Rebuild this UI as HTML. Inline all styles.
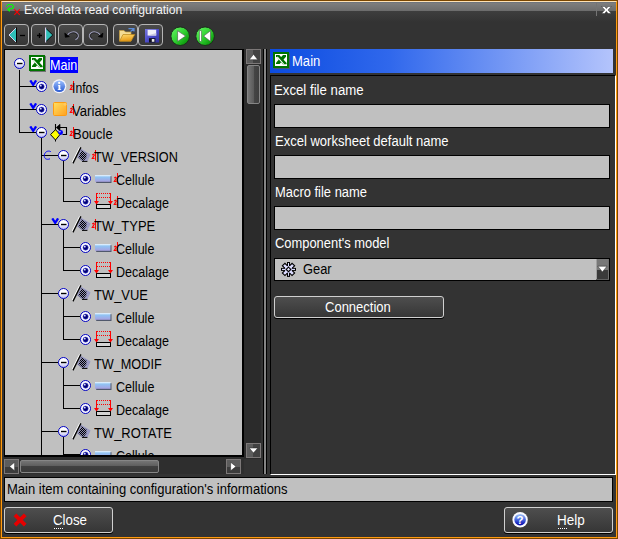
<!DOCTYPE html><html><head><meta charset="utf-8"><title>Excel data read configuration</title><style>
*{box-sizing:border-box;margin:0;padding:0}
html,body{width:618px;height:539px;overflow:hidden;background:#333}
body{font-family:"Liberation Sans",sans-serif;font-size:14px;color:#000;position:relative}
.abs{position:absolute}
#win{position:absolute;left:0;top:0;width:618px;height:539px;background:#333;overflow:hidden}
.t{position:absolute;white-space:nowrap;line-height:16px;height:16px;transform-origin:0 0}
.tb{position:absolute;top:24px;width:25px;height:22px;border:1px solid #b4b4b4;border-radius:4px;background:linear-gradient(#4a4a4a,#363636)}
.field{position:absolute;left:274px;width:336px;height:24px;background:#c0c0c0;border:1px solid #000;}
.btn{position:absolute;border:1px solid #d0d0d0;border-radius:3px;background:linear-gradient(#4e4e4e,#363636);box-shadow:0 1px 0 #000}
.hl{position:absolute;background:#000;height:1px}
.vl{position:absolute;background:#000;width:1px}
</style></head><body><div id="win">
<div class="abs" style="left:0;top:0;width:618px;height:539px;border:1px solid #7a4600"></div>
<div class="abs" style="left:1px;top:1px;width:616px;height:537px;border:1px solid #ff9a10;border-top-color:#ffe2b4"></div>
<div class="abs" style="left:2px;top:2px;width:614px;height:9px;background:linear-gradient(#808080,#6c6c6c)"></div>
<div class="abs" style="left:2px;top:11px;width:614px;height:11px;background:linear-gradient(#3e3e3e,#333)"></div>
<div class="abs" style="left:2px;top:2px;width:614px;height:1px;background:#6e747c"></div>
<div class="abs" style="left:596px;top:2px;width:1px;height:14px;background:#747474"></div>
<svg class="abs" style="left:5px;top:3px" width="16" height="13" viewBox="5 3 16 13">
<path d="M6.300 6.600 L8.200 4.500 H12 L13.700 6.700 L12.200 8.700 H10" fill="none" stroke="#00ff00" stroke-width="1.100"/>
<path d="M6.800 9.400 L9.800 6.800 V12 Z" fill="#00ff00"/>
<path d="M14.300 9.300 L19.800 14.800 M19.800 9.300 L14.300 14.800" stroke="#ff0000" stroke-width="1.100" fill="none"/>
</svg>
<div class="t" style="left:24.35px;top:2px;color:#f4f4f4;font-size:13px;transform:scaleX(0.9407)">Excel data read configuration</div>
<svg class="abs" style="left:601px;top:6px" width="11" height="8" viewBox="0 0 11 8"><path d="M0.500 0.400 H3.700 L5.400 2.500 L7.100 0.400 H10.300 L7 4 L10.300 7.600 H7.100 L5.400 5.500 L3.700 7.600 H0.500 L3.800 4 Z" fill="#fff" stroke="#2a2a2a" stroke-width="0.500"/></svg>
<div class="tb" style="left:4px"></div>
<div class="tb" style="left:31px"></div>
<div class="tb" style="left:58px"></div>
<div class="tb" style="left:83px"></div>
<div class="tb" style="left:113px"></div>
<div class="tb" style="left:138px"></div>
<svg class="abs" style="left:4px;top:24px" width="25" height="22" viewBox="4 24 25 22"><path d="M16 28 L9 35 L16 42 Z" fill="#2fc0b8"/><path d="M16 28 L9 35 L16 42" fill="none" stroke="#e4e0ff" stroke-width="0.900"/><path d="M16.500 27.500 V42.500" stroke="#000" stroke-width="1"/>
<path d="M20 35.500 H25" stroke="#000" stroke-width="1.300"/></svg>
<svg class="abs" style="left:31px;top:24px" width="25" height="22" viewBox="31 24 25 22"><path d="M45.500 28 L52.800 35 L45.500 42 Z" fill="#2fc0b8" stroke="#000" stroke-width="0.900"/><path d="M45.600 27.500 V42.500" stroke="#e4e0ff" stroke-width="1.100"/>
<path d="M37 35.500 H42 M39.500 33 V38" stroke="#000" stroke-width="1.300"/></svg>
<svg class="abs" style="left:58px;top:24px" width="25" height="22" viewBox="58 24 25 22"><path d="M67.300 35.500 C69 32.300 73.500 31 76.500 32.800 C79.500 34.800 78.600 38 75.300 39.600" fill="none" stroke="#9c9cb8" stroke-width="1.300"/><path d="M68.200 35.600 C69.800 33 73.500 32 76 33.500 C78.300 35 77.700 37.600 75.300 38.800" fill="none" stroke="#000" stroke-width="0.600"/>
<path d="M64.800 33.200 L65.400 37.300 L69.300 36.600 Z" fill="#000" stroke="#000" stroke-width="0.800"/></svg>
<svg class="abs" style="left:83px;top:24px" width="25" height="22" viewBox="83 24 25 22"><path d="M100.400 35.500 C98.700 32.300 94.200 31 91.200 32.800 C88.200 34.800 89.100 38 92.400 39.600" fill="none" stroke="#9c9cb8" stroke-width="1.300"/><path d="M99.500 35.600 C97.900 33 94.200 32 91.700 33.500 C89.400 35 90 37.600 92.400 38.800" fill="none" stroke="#000" stroke-width="0.600"/>
<path d="M102.900 33.200 L102.300 37.300 L98.400 36.600 Z" fill="#000" stroke="#000" stroke-width="0.800"/></svg>
<svg class="abs" style="left:113px;top:24px" width="25" height="22" viewBox="113 24 25 22"><defs><linearGradient id="fg" x1="0" y1="0" x2="0.300" y2="1"><stop offset="0" stop-color="#ffdc70"/><stop offset="1" stop-color="#e89c18"/></linearGradient></defs>
<path d="M119.500 30.500 H124 L125.500 32 H131 V41 H119.500 Z" fill="#f4dc94" stroke="#c8a040" stroke-width="0.700"/>
<path d="M123 34.500 H134.800 L131 41.200 H119.500 Z" fill="url(#fg)" stroke="#b88418" stroke-width="0.700"/>
<path d="M128.500 28.700 H134 V31.500 M134 28.700 L130.500 31.500" fill="none" stroke="#5c8cd8" stroke-width="1.200"/></svg>
<svg class="abs" style="left:138px;top:24px" width="25" height="22" viewBox="138 24 25 22"><defs><linearGradient id="sg" x1="0" y1="0" x2="1" y2="1"><stop offset="0" stop-color="#7878e0"/><stop offset="0.500" stop-color="#4c4cc8"/><stop offset="1" stop-color="#3030a0"/></linearGradient></defs>
<rect x="145" y="29" width="14" height="13.500" fill="url(#sg)"/>
<rect x="147.600" y="29.800" width="8.600" height="5.700" fill="#f0f0f8"/><path d="M147.600 35.500 H156.200 V33 Z" fill="#c8c8e0"/>
<rect x="149" y="38.200" width="6.400" height="4.300" fill="#101020"/><rect x="151.800" y="39" width="2.600" height="2.800" fill="#e8e8e8"/></svg>
<svg class="abs" style="left:170px;top:26px" width="21" height="21" viewBox="170 26 21 21">
<defs><linearGradient id="gg" x1="0.150" y1="0.150" x2="0.850" y2="0.850"><stop offset="0" stop-color="#58ec58"/><stop offset="0.500" stop-color="#30d030"/><stop offset="1" stop-color="#0c980c"/></linearGradient></defs>
<circle cx="180.200" cy="36.200" r="9.300" fill="url(#gg)" stroke="#1c2c1c" stroke-width="1"/>
<path d="M177.600 30.800 L185.600 36.100 L177.600 41.400 Z" fill="#fff" stroke="#505050" stroke-width="0.600"/></svg>
<svg class="abs" style="left:195px;top:26px" width="21" height="21" viewBox="195 26 21 21">
<circle cx="205.100" cy="36.200" r="9.300" fill="url(#gg)" stroke="#1c2c1c" stroke-width="1"/>
<rect x="199.500" y="30.800" width="1.900" height="10.600" fill="#fff" stroke="#505050" stroke-width="0.500"/>
<path d="M210.500 30.800 L203.600 36.100 L210.500 41.400 Z" fill="#fff" stroke="#505050" stroke-width="0.600"/></svg>
<div class="abs" style="left:4px;top:49px;width:240px;height:408px;background:#000"></div>
<div id="tree" class="abs" style="left:5px;top:50px;width:237px;height:405px;background:#c0c0c0;overflow:hidden">
<svg class="abs" width="0" height="0"><defs>
<linearGradient id="mg" x1="0" y1="0" x2="0" y2="1"><stop offset="0.450" stop-color="#fff"/><stop offset="1" stop-color="#b8b8f0"/></linearGradient>
<linearGradient id="ig" x1="0" y1="0" x2="0" y2="1"><stop offset="0" stop-color="#9cc0ff"/><stop offset="1" stop-color="#2858d0"/></linearGradient>
<linearGradient id="ng" x1="0" y1="0" x2="1" y2="1"><stop offset="0" stop-color="#ffe060"/><stop offset="1" stop-color="#ffa020"/></linearGradient>
<linearGradient id="cg" x1="0" y1="0" x2="0" y2="1"><stop offset="0" stop-color="#f0f8ff"/><stop offset="0.300" stop-color="#90c4f4"/><stop offset="1" stop-color="#a8a0e0"/></linearGradient>
<pattern id="ck" width="2" height="2" patternUnits="userSpaceOnUse"><rect width="2" height="2" fill="#8c8cb0"/><rect width="1" height="1" fill="#000"/><rect x="1" y="1" width="1" height="1" fill="#000"/></pattern>
</defs></svg>
<div class="vl" style="left:14px;top:20px;height:63px"></div>
<div class="hl" style="left:14px;top:36px;width:17px"></div>
<div class="hl" style="left:14px;top:59px;width:17px"></div>
<div class="hl" style="left:14px;top:82px;width:17px"></div>
<div class="vl" style="left:36px;top:88px;height:317px"></div>
<svg class="abs" style="left:9px;top:8px" width="11" height="11" viewBox="0 0 11 11"><circle cx="5.500" cy="5.500" r="5" fill="url(#mg)" stroke="#0000c0" stroke-width="1"/><path d="M3 5.500 H8.500" stroke="#000" stroke-width="1.400"/></svg>
<svg class="abs" style="left:24px;top:5px" width="17" height="17" viewBox="0 0 17 17"><rect x="1" y="1" width="16" height="16" fill="#585858" opacity="0.750"/><rect x="0" y="0" width="16" height="16" fill="#007400"/><rect x="2" y="2" width="12" height="12" fill="#fff"/><path d="M3 3 H6.300 L13.600 11 V12.300 H9.800 L3 4.300 Z" fill="#007400"/><path d="M10 3 H13 V4.800 L6.600 12 H3 V10.800 Z" fill="#007400"/><path d="M4.200 4.800 L10.600 12" stroke="#fff" stroke-width="1.100"/><rect x="12" y="6.600" width="2" height="2.200" fill="#fff"/></svg>
<div class="abs" style="left:45px;top:7px;width:28px;height:16px;background:#0000ff"></div>
<div class="t" style="left:44.79px;top:7px;color:#fff;transform:scaleX(0.8959)">Main</div>
<svg class="abs" style="left:24px;top:30px" width="9" height="6" viewBox="0 0 9 6"><path d="M1.300 0.400 L4.200 4.800 L7.100 0.400" fill="none" stroke="#0000ff" stroke-width="2.300" stroke-linejoin="miter"/></svg>
<svg class="abs" style="left:31px;top:31px" width="11" height="11" viewBox="0 0 11 11"><circle cx="5.500" cy="5.500" r="5" fill="#fff" stroke="#0000c0" stroke-width="1"/><circle cx="5.600" cy="5.600" r="2.600" fill="#000078" stroke="#4848d0" stroke-width="0.600"/><circle cx="4.800" cy="4.700" r="0.900" fill="#e0e0ff"/></svg>
<svg class="abs" style="left:47px;top:29px" width="15" height="15" viewBox="0 0 15 15"><circle cx="7.300" cy="7.300" r="7" fill="#f4f4fc"/><circle cx="7.300" cy="7.300" r="5.800" fill="url(#ig)"/><path d="M6.200 6 H8.300 V10.200 H9.200 V11 H5.700 V10.200 H6.500 V6.800 H5.900 Z" fill="#fff"/><circle cx="7.200" cy="3.900" r="1.100" fill="#fff"/></svg>
<svg class="abs" style="left:64px;top:31px" width="6" height="11" viewBox="0 0 6 11"><path d="M4.500 0 V10.500" stroke="#ff0000" stroke-width="1"/><path d="M1.200 5 L2.500 4.200 L3.300 5 L1.300 8.300 L3.600 8.300" fill="none" stroke="#ff0000" stroke-width="1.150"/></svg>
<div class="t" style="left:67.11px;top:30px;color:#000;transform:scaleX(0.8729)">Infos</div>
<svg class="abs" style="left:24px;top:53px" width="9" height="6" viewBox="0 0 9 6"><path d="M1.300 0.400 L4.200 4.800 L7.100 0.400" fill="none" stroke="#0000ff" stroke-width="2.300" stroke-linejoin="miter"/></svg>
<svg class="abs" style="left:31px;top:54px" width="11" height="11" viewBox="0 0 11 11"><circle cx="5.500" cy="5.500" r="5" fill="#fff" stroke="#0000c0" stroke-width="1"/><circle cx="5.600" cy="5.600" r="2.600" fill="#000078" stroke="#4848d0" stroke-width="0.600"/><circle cx="4.800" cy="4.700" r="0.900" fill="#e0e0ff"/></svg>
<svg class="abs" style="left:48px;top:52px" width="14" height="14" viewBox="0 0 14 14"><rect x="0.500" y="0.500" width="13" height="13" rx="1" fill="url(#ng)" stroke="#ff9c10" stroke-width="1"/><circle cx="12" cy="2.300" r="1.500" fill="#ffc860"/></svg>
<svg class="abs" style="left:64px;top:54px" width="6" height="11" viewBox="0 0 6 11"><path d="M4.500 0 V10.500" stroke="#ff0000" stroke-width="1"/><path d="M1.200 5 L2.500 4.200 L3.300 5 L1.300 8.300 L3.600 8.300" fill="none" stroke="#ff0000" stroke-width="1.150"/></svg>
<div class="t" style="left:66.96px;top:53px;color:#000;transform:scaleX(0.9385)">Variables</div>
<svg class="abs" style="left:24px;top:76px" width="9" height="6" viewBox="0 0 9 6"><path d="M1.300 0.400 L4.200 4.800 L7.100 0.400" fill="none" stroke="#0000ff" stroke-width="2.300" stroke-linejoin="miter"/></svg>
<svg class="abs" style="left:31px;top:77px" width="11" height="11" viewBox="0 0 11 11"><circle cx="5.500" cy="5.500" r="5" fill="url(#mg)" stroke="#0000c0" stroke-width="1"/><path d="M3 5.500 H8.500" stroke="#000" stroke-width="1.400"/></svg>
<svg class="abs" style="left:45px;top:74px" width="18" height="18" viewBox="0 0 18 18"><path d="M10 3.500 H16.500 V10.500 H12.500" fill="none" stroke="#000" stroke-width="1.100"/><path d="M6.300 3.500 L10 0.300 V6.700 Z" fill="#000" stroke="#000" stroke-width="0.700"/><path d="M5.500 0 V6.500" stroke="#000" stroke-width="1.100"/><path d="M5.500 5.700 L10 10.500 L5.500 16 L0.500 10.600 Z" fill="#ffff00" stroke="#000" stroke-width="1"/><path d="M5.500 16 V17.500" stroke="#000" stroke-width="1"/><circle cx="10.600" cy="8.500" r="2.400" fill="#0000ff"/><circle cx="9.900" cy="7.800" r="0.700" fill="#fff"/></svg>
<svg class="abs" style="left:64px;top:77px" width="6" height="11" viewBox="0 0 6 11"><path d="M4.500 0 V10.500" stroke="#ff0000" stroke-width="1"/><path d="M1.200 5 L2.500 4.200 L3.300 5 L1.300 8.300 L3.600 8.300" fill="none" stroke="#ff0000" stroke-width="1.150"/></svg>
<div class="t" style="left:67.57px;top:76px;color:#000;transform:scaleX(0.9250)">Boucle</div>
<div class="hl" style="left:36px;top:105px;width:17px"></div>
<svg class="abs" style="left:38px;top:100px" width="9" height="11" viewBox="0 0 9 11"><path d="M7.800 1.600 C4.500 0 1.600 2.300 1.300 5.300 C1 8.600 3.500 10.200 7 8.800" fill="none" stroke="#0000ff" stroke-width="0.950"/></svg>
<svg class="abs" style="left:53px;top:100px" width="11" height="11" viewBox="0 0 11 11"><circle cx="5.500" cy="5.500" r="5" fill="url(#mg)" stroke="#0000c0" stroke-width="1"/><path d="M3 5.500 H8.500" stroke="#000" stroke-width="1.400"/></svg>
<svg class="abs" style="left:67px;top:97px" width="20" height="18" viewBox="0 0 20 18"><path d="M8.800 1.500 L18.600 7.400 L15.400 14.200 L10 14.200 L5 10.500 Z" fill="#9c9cc4"/><path d="M9.600 3.300 L14.600 6.600 L14.300 10.500 L11.800 13.800 L9.500 13.200 L6.300 10.300 Z" fill="url(#ck)"/><path d="M10 14.400 H15.400" stroke="#000" stroke-width="1"/><path d="M-0.300 16.400 L7.700 0.400" stroke="#fff" stroke-width="1.200"/><path d="M0.900 16.400 L8.900 0.400" stroke="#000" stroke-width="1.300"/></svg>
<svg class="abs" style="left:86px;top:100px" width="6" height="11" viewBox="0 0 6 11"><path d="M4.500 0 V10.500" stroke="#ff0000" stroke-width="1"/><path d="M1.200 5 L2.500 4.200 L3.300 5 L1.300 8.300 L3.600 8.300" fill="none" stroke="#ff0000" stroke-width="1.150"/></svg>
<div class="t" style="left:89.38px;top:99px;color:#000;transform:scaleX(0.9063)">TW_VERSION</div>
<div class="vl" style="left:58px;top:111px;height:41px"></div>
<div class="hl" style="left:58px;top:128px;width:17px"></div>
<div class="hl" style="left:58px;top:151px;width:17px"></div>
<svg class="abs" style="left:75px;top:123px" width="11" height="11" viewBox="0 0 11 11"><circle cx="5.500" cy="5.500" r="5" fill="#fff" stroke="#0000c0" stroke-width="1"/><circle cx="5.600" cy="5.600" r="2.600" fill="#000078" stroke="#4848d0" stroke-width="0.600"/><circle cx="4.800" cy="4.700" r="0.900" fill="#e0e0ff"/></svg>
<svg class="abs" style="left:90px;top:125px" width="17" height="9" viewBox="0 0 17 9"><rect x="1.200" y="1.200" width="15.300" height="6.800" fill="#50586c"/><rect x="0" y="0" width="15.500" height="6.800" fill="url(#cg)"/></svg>
<svg class="abs" style="left:108px;top:123px" width="6" height="11" viewBox="0 0 6 11"><path d="M4.500 0 V10.500" stroke="#ff0000" stroke-width="1"/><path d="M1.200 5 L2.500 4.200 L3.300 5 L1.300 8.300 L3.600 8.300" fill="none" stroke="#ff0000" stroke-width="1.150"/></svg>
<div class="t" style="left:111.49px;top:122px;color:#000;transform:scaleX(0.8969)">Cellule</div>
<svg class="abs" style="left:75px;top:146px" width="11" height="11" viewBox="0 0 11 11"><circle cx="5.500" cy="5.500" r="5" fill="#fff" stroke="#0000c0" stroke-width="1"/><circle cx="5.600" cy="5.600" r="2.600" fill="#000078" stroke="#4848d0" stroke-width="0.600"/><circle cx="4.800" cy="4.700" r="0.900" fill="#e0e0ff"/></svg>
<svg class="abs" style="left:89px;top:142px" width="20" height="18" viewBox="0 0 20 18"><g shape-rendering="crispEdges"><path d="M3 1.500 H16 M3 5.500 H16" stroke="#ff0000" stroke-width="1" stroke-dasharray="1 1"/><path d="M2.500 1 V12 M16.500 1 V12" stroke="#ff0000" stroke-width="1"/><rect x="2.500" y="12.500" width="14" height="4" fill="#d4d4d4" stroke="#000" stroke-width="1"/></g><path d="M0 9 H5 L2.500 12.500 Z M14 9 H19 L16.500 12.500 Z" fill="#ff0000"/></svg>
<svg class="abs" style="left:108px;top:146px" width="6" height="11" viewBox="0 0 6 11"><path d="M4.500 0 V10.500" stroke="#ff0000" stroke-width="1"/><path d="M1.200 5 L2.500 4.200 L3.300 5 L1.300 8.300 L3.600 8.300" fill="none" stroke="#ff0000" stroke-width="1.150"/></svg>
<div class="t" style="left:111.49px;top:145px;color:#000;transform:scaleX(0.8959)">Decalage</div>
<div class="hl" style="left:36px;top:174px;width:17px"></div>
<svg class="abs" style="left:46px;top:168px" width="9" height="6" viewBox="0 0 9 6"><path d="M1.300 0.400 L4.200 4.800 L7.100 0.400" fill="none" stroke="#0000ff" stroke-width="2.300" stroke-linejoin="miter"/></svg>
<svg class="abs" style="left:53px;top:169px" width="11" height="11" viewBox="0 0 11 11"><circle cx="5.500" cy="5.500" r="5" fill="url(#mg)" stroke="#0000c0" stroke-width="1"/><path d="M3 5.500 H8.500" stroke="#000" stroke-width="1.400"/></svg>
<svg class="abs" style="left:67px;top:166px" width="20" height="18" viewBox="0 0 20 18"><path d="M8.800 1.500 L18.600 7.400 L15.400 14.200 L10 14.200 L5 10.500 Z" fill="#9c9cc4"/><path d="M9.600 3.300 L14.600 6.600 L14.300 10.500 L11.800 13.800 L9.500 13.200 L6.300 10.300 Z" fill="url(#ck)"/><path d="M10 14.400 H15.400" stroke="#000" stroke-width="1"/><path d="M-0.300 16.400 L7.700 0.400" stroke="#fff" stroke-width="1.200"/><path d="M0.900 16.400 L8.900 0.400" stroke="#000" stroke-width="1.300"/></svg>
<svg class="abs" style="left:86px;top:169px" width="6" height="11" viewBox="0 0 6 11"><path d="M4.500 0 V10.500" stroke="#ff0000" stroke-width="1"/><path d="M1.200 5 L2.500 4.200 L3.300 5 L1.300 8.300 L3.600 8.300" fill="none" stroke="#ff0000" stroke-width="1.150"/></svg>
<div class="t" style="left:89.37px;top:168px;color:#000;transform:scaleX(0.9250)">TW_TYPE</div>
<div class="vl" style="left:58px;top:180px;height:41px"></div>
<div class="hl" style="left:58px;top:197px;width:17px"></div>
<div class="hl" style="left:58px;top:220px;width:17px"></div>
<svg class="abs" style="left:75px;top:192px" width="11" height="11" viewBox="0 0 11 11"><circle cx="5.500" cy="5.500" r="5" fill="#fff" stroke="#0000c0" stroke-width="1"/><circle cx="5.600" cy="5.600" r="2.600" fill="#000078" stroke="#4848d0" stroke-width="0.600"/><circle cx="4.800" cy="4.700" r="0.900" fill="#e0e0ff"/></svg>
<svg class="abs" style="left:90px;top:194px" width="17" height="9" viewBox="0 0 17 9"><rect x="1.200" y="1.200" width="15.300" height="6.800" fill="#50586c"/><rect x="0" y="0" width="15.500" height="6.800" fill="url(#cg)"/></svg>
<svg class="abs" style="left:108px;top:192px" width="6" height="11" viewBox="0 0 6 11"><path d="M4.500 0 V10.500" stroke="#ff0000" stroke-width="1"/><path d="M1.200 5 L2.500 4.200 L3.300 5 L1.300 8.300 L3.600 8.300" fill="none" stroke="#ff0000" stroke-width="1.150"/></svg>
<div class="t" style="left:111.49px;top:191px;color:#000;transform:scaleX(0.8969)">Cellule</div>
<svg class="abs" style="left:75px;top:215px" width="11" height="11" viewBox="0 0 11 11"><circle cx="5.500" cy="5.500" r="5" fill="#fff" stroke="#0000c0" stroke-width="1"/><circle cx="5.600" cy="5.600" r="2.600" fill="#000078" stroke="#4848d0" stroke-width="0.600"/><circle cx="4.800" cy="4.700" r="0.900" fill="#e0e0ff"/></svg>
<svg class="abs" style="left:89px;top:211px" width="20" height="18" viewBox="0 0 20 18"><g shape-rendering="crispEdges"><path d="M3 1.500 H16 M3 5.500 H16" stroke="#ff0000" stroke-width="1" stroke-dasharray="1 1"/><path d="M2.500 1 V12 M16.500 1 V12" stroke="#ff0000" stroke-width="1"/><rect x="2.500" y="12.500" width="14" height="4" fill="#d4d4d4" stroke="#000" stroke-width="1"/></g><path d="M0 9 H5 L2.500 12.500 Z M14 9 H19 L16.500 12.500 Z" fill="#ff0000"/></svg>
<div class="t" style="left:111.49px;top:214px;color:#000;transform:scaleX(0.8959)">Decalage</div>
<div class="hl" style="left:36px;top:243px;width:17px"></div>
<svg class="abs" style="left:53px;top:238px" width="11" height="11" viewBox="0 0 11 11"><circle cx="5.500" cy="5.500" r="5" fill="url(#mg)" stroke="#0000c0" stroke-width="1"/><path d="M3 5.500 H8.500" stroke="#000" stroke-width="1.400"/></svg>
<svg class="abs" style="left:67px;top:235px" width="20" height="18" viewBox="0 0 20 18"><path d="M8.800 1.500 L18.600 7.400 L15.400 14.200 L10 14.200 L5 10.500 Z" fill="#9c9cc4"/><path d="M9.600 3.300 L14.600 6.600 L14.300 10.500 L11.800 13.800 L9.500 13.200 L6.300 10.300 Z" fill="url(#ck)"/><path d="M10 14.400 H15.400" stroke="#000" stroke-width="1"/><path d="M-0.300 16.400 L7.700 0.400" stroke="#fff" stroke-width="1.200"/><path d="M0.900 16.400 L8.900 0.400" stroke="#000" stroke-width="1.300"/></svg>
<div class="t" style="left:89.37px;top:237px;color:#000;transform:scaleX(0.9250)">TW_VUE</div>
<div class="vl" style="left:58px;top:249px;height:41px"></div>
<div class="hl" style="left:58px;top:266px;width:17px"></div>
<div class="hl" style="left:58px;top:289px;width:17px"></div>
<svg class="abs" style="left:75px;top:261px" width="11" height="11" viewBox="0 0 11 11"><circle cx="5.500" cy="5.500" r="5" fill="#fff" stroke="#0000c0" stroke-width="1"/><circle cx="5.600" cy="5.600" r="2.600" fill="#000078" stroke="#4848d0" stroke-width="0.600"/><circle cx="4.800" cy="4.700" r="0.900" fill="#e0e0ff"/></svg>
<svg class="abs" style="left:90px;top:263px" width="17" height="9" viewBox="0 0 17 9"><rect x="1.200" y="1.200" width="15.300" height="6.800" fill="#50586c"/><rect x="0" y="0" width="15.500" height="6.800" fill="url(#cg)"/></svg>
<div class="t" style="left:111.49px;top:260px;color:#000;transform:scaleX(0.8969)">Cellule</div>
<svg class="abs" style="left:75px;top:284px" width="11" height="11" viewBox="0 0 11 11"><circle cx="5.500" cy="5.500" r="5" fill="#fff" stroke="#0000c0" stroke-width="1"/><circle cx="5.600" cy="5.600" r="2.600" fill="#000078" stroke="#4848d0" stroke-width="0.600"/><circle cx="4.800" cy="4.700" r="0.900" fill="#e0e0ff"/></svg>
<svg class="abs" style="left:89px;top:280px" width="20" height="18" viewBox="0 0 20 18"><g shape-rendering="crispEdges"><path d="M3 1.500 H16 M3 5.500 H16" stroke="#ff0000" stroke-width="1" stroke-dasharray="1 1"/><path d="M2.500 1 V12 M16.500 1 V12" stroke="#ff0000" stroke-width="1"/><rect x="2.500" y="12.500" width="14" height="4" fill="#d4d4d4" stroke="#000" stroke-width="1"/></g><path d="M0 9 H5 L2.500 12.500 Z M14 9 H19 L16.500 12.500 Z" fill="#ff0000"/></svg>
<div class="t" style="left:111.49px;top:283px;color:#000;transform:scaleX(0.8959)">Decalage</div>
<div class="hl" style="left:36px;top:312px;width:17px"></div>
<svg class="abs" style="left:53px;top:307px" width="11" height="11" viewBox="0 0 11 11"><circle cx="5.500" cy="5.500" r="5" fill="url(#mg)" stroke="#0000c0" stroke-width="1"/><path d="M3 5.500 H8.500" stroke="#000" stroke-width="1.400"/></svg>
<svg class="abs" style="left:67px;top:304px" width="20" height="18" viewBox="0 0 20 18"><path d="M8.800 1.500 L18.600 7.400 L15.400 14.200 L10 14.200 L5 10.500 Z" fill="#9c9cc4"/><path d="M9.600 3.300 L14.600 6.600 L14.300 10.500 L11.800 13.800 L9.500 13.200 L6.300 10.300 Z" fill="url(#ck)"/><path d="M10 14.400 H15.400" stroke="#000" stroke-width="1"/><path d="M-0.300 16.400 L7.700 0.400" stroke="#fff" stroke-width="1.200"/><path d="M0.900 16.400 L8.900 0.400" stroke="#000" stroke-width="1.300"/></svg>
<div class="t" style="left:89.38px;top:306px;color:#000;transform:scaleX(0.9068)">TW_MODIF</div>
<div class="vl" style="left:58px;top:318px;height:41px"></div>
<div class="hl" style="left:58px;top:335px;width:17px"></div>
<div class="hl" style="left:58px;top:358px;width:17px"></div>
<svg class="abs" style="left:75px;top:330px" width="11" height="11" viewBox="0 0 11 11"><circle cx="5.500" cy="5.500" r="5" fill="#fff" stroke="#0000c0" stroke-width="1"/><circle cx="5.600" cy="5.600" r="2.600" fill="#000078" stroke="#4848d0" stroke-width="0.600"/><circle cx="4.800" cy="4.700" r="0.900" fill="#e0e0ff"/></svg>
<svg class="abs" style="left:90px;top:332px" width="17" height="9" viewBox="0 0 17 9"><rect x="1.200" y="1.200" width="15.300" height="6.800" fill="#50586c"/><rect x="0" y="0" width="15.500" height="6.800" fill="url(#cg)"/></svg>
<div class="t" style="left:111.49px;top:329px;color:#000;transform:scaleX(0.8969)">Cellule</div>
<svg class="abs" style="left:75px;top:353px" width="11" height="11" viewBox="0 0 11 11"><circle cx="5.500" cy="5.500" r="5" fill="#fff" stroke="#0000c0" stroke-width="1"/><circle cx="5.600" cy="5.600" r="2.600" fill="#000078" stroke="#4848d0" stroke-width="0.600"/><circle cx="4.800" cy="4.700" r="0.900" fill="#e0e0ff"/></svg>
<svg class="abs" style="left:89px;top:349px" width="20" height="18" viewBox="0 0 20 18"><g shape-rendering="crispEdges"><path d="M3 1.500 H16 M3 5.500 H16" stroke="#ff0000" stroke-width="1" stroke-dasharray="1 1"/><path d="M2.500 1 V12 M16.500 1 V12" stroke="#ff0000" stroke-width="1"/><rect x="2.500" y="12.500" width="14" height="4" fill="#d4d4d4" stroke="#000" stroke-width="1"/></g><path d="M0 9 H5 L2.500 12.500 Z M14 9 H19 L16.500 12.500 Z" fill="#ff0000"/></svg>
<div class="t" style="left:111.49px;top:352px;color:#000;transform:scaleX(0.8959)">Decalage</div>
<div class="hl" style="left:36px;top:381px;width:17px"></div>
<svg class="abs" style="left:53px;top:376px" width="11" height="11" viewBox="0 0 11 11"><circle cx="5.500" cy="5.500" r="5" fill="url(#mg)" stroke="#0000c0" stroke-width="1"/><path d="M3 5.500 H8.500" stroke="#000" stroke-width="1.400"/></svg>
<svg class="abs" style="left:67px;top:373px" width="20" height="18" viewBox="0 0 20 18"><path d="M8.800 1.500 L18.600 7.400 L15.400 14.200 L10 14.200 L5 10.500 Z" fill="#9c9cc4"/><path d="M9.600 3.300 L14.600 6.600 L14.300 10.500 L11.800 13.800 L9.500 13.200 L6.300 10.300 Z" fill="url(#ck)"/><path d="M10 14.400 H15.400" stroke="#000" stroke-width="1"/><path d="M-0.300 16.400 L7.700 0.400" stroke="#fff" stroke-width="1.200"/><path d="M0.900 16.400 L8.900 0.400" stroke="#000" stroke-width="1.300"/></svg>
<div class="t" style="left:89.37px;top:375px;color:#000;transform:scaleX(0.9250)">TW_ROTATE</div>
<div class="vl" style="left:58px;top:387px;height:41px"></div>
<div class="hl" style="left:58px;top:404px;width:17px"></div>
<div class="hl" style="left:58px;top:427px;width:17px"></div>
<svg class="abs" style="left:75px;top:399px" width="11" height="11" viewBox="0 0 11 11"><circle cx="5.500" cy="5.500" r="5" fill="#fff" stroke="#0000c0" stroke-width="1"/><circle cx="5.600" cy="5.600" r="2.600" fill="#000078" stroke="#4848d0" stroke-width="0.600"/><circle cx="4.800" cy="4.700" r="0.900" fill="#e0e0ff"/></svg>
<svg class="abs" style="left:90px;top:401px" width="17" height="9" viewBox="0 0 17 9"><rect x="1.200" y="1.200" width="15.300" height="6.800" fill="#50586c"/><rect x="0" y="0" width="15.500" height="6.800" fill="url(#cg)"/></svg>
<div class="t" style="left:111.49px;top:398px;color:#000;transform:scaleX(0.8969)">Cellule</div>
<svg class="abs" style="left:75px;top:422px" width="11" height="11" viewBox="0 0 11 11"><circle cx="5.500" cy="5.500" r="5" fill="#fff" stroke="#0000c0" stroke-width="1"/><circle cx="5.600" cy="5.600" r="2.600" fill="#000078" stroke="#4848d0" stroke-width="0.600"/><circle cx="4.800" cy="4.700" r="0.900" fill="#e0e0ff"/></svg>
<svg class="abs" style="left:89px;top:418px" width="20" height="18" viewBox="0 0 20 18"><g shape-rendering="crispEdges"><path d="M3 1.500 H16 M3 5.500 H16" stroke="#ff0000" stroke-width="1" stroke-dasharray="1 1"/><path d="M2.500 1 V12 M16.500 1 V12" stroke="#ff0000" stroke-width="1"/><rect x="2.500" y="12.500" width="14" height="4" fill="#d4d4d4" stroke="#000" stroke-width="1"/></g><path d="M0 9 H5 L2.500 12.500 Z M14 9 H19 L16.500 12.500 Z" fill="#ff0000"/></svg>
<div class="t" style="left:111.49px;top:421px;color:#000;transform:scaleX(0.8959)">Decalage</div>
</div>
<div class="abs" style="left:244px;top:49px;width:17px;height:410px;background:#2b2b2b"></div>
<svg class="abs" style="left:246px;top:49px" width="15" height="15" viewBox="0 0 15 15"><rect x="0.500" y="0.500" width="7" height="14" fill="#5c5c5c"/><rect x="7.500" y="0.500" width="7" height="14" fill="#424242"/><rect x="0.500" y="0.500" width="14" height="14" fill="none" stroke="#7c7878"/><path d="M3.200 10.700 L7.500 5.300 L11.800 10.700 Z" fill="#fff" stroke="#222" stroke-width="0.500"/></svg>
<svg class="abs" style="left:246px;top:443px" width="15" height="15" viewBox="0 0 15 15"><rect x="0.500" y="0.500" width="7" height="14" fill="#5c5c5c"/><rect x="7.500" y="0.500" width="7" height="14" fill="#424242"/><rect x="0.500" y="0.500" width="14" height="14" fill="none" stroke="#7c7878"/><path d="M3.200 5 L7.500 10 L11.800 5 Z" fill="#fff" stroke="#222" stroke-width="0.500"/></svg>
<div class="abs" style="left:247px;top:65px;width:13px;height:39px;border:1px solid #868686;border-radius:2px;background:linear-gradient(90deg,#767676 0,#5c5c5c 50%,#464646 50%,#3e3e3e)"></div>
<div class="abs" style="left:4px;top:457px;width:240px;height:17px;background:#2e2e2e"></div>
<svg class="abs" style="left:4px;top:459px" width="15" height="15" viewBox="0 0 15 15"><rect x="0.500" y="0.500" width="14" height="7.500" fill="#5c5c5c"/><rect x="0.500" y="8" width="14" height="6.500" fill="#3c3c3c"/><rect x="0.500" y="0.500" width="14" height="14" fill="none" stroke="#7c7878"/><path d="M10.600 3.200 L5.500 7.500 L10.600 11.800 Z" fill="#fff" stroke="#222" stroke-width="0.500"/></svg>
<svg class="abs" style="left:226px;top:459px" width="15" height="15" viewBox="0 0 15 15"><rect x="0.500" y="0.500" width="14" height="7.500" fill="#5c5c5c"/><rect x="0.500" y="8" width="14" height="6.500" fill="#3c3c3c"/><rect x="0.500" y="0.500" width="14" height="14" fill="none" stroke="#7c7878"/><path d="M4.600 3.200 L10 7.500 L4.600 11.800 Z" fill="#fff" stroke="#222" stroke-width="0.500"/></svg>
<div class="abs" style="left:20px;top:460px;width:139px;height:13px;border:1px solid #868686;border-radius:2px;background:linear-gradient(#747474 0,#5c5c5c 50%,#404040 50%,#3a3a3a)"></div>
<div class="abs" style="left:263px;top:49px;width:4px;height:425px;background:#000"></div>
<div class="abs" style="left:264px;top:49px;width:2px;height:425px;background:#848484"></div>
<div class="abs" style="left:270px;top:49px;width:343px;height:24px;background:linear-gradient(90deg,#0c4ce0,#3068ec 35%,#b4c4fc)"></div>
<svg class="abs" style="left:273px;top:52px" width="17" height="17" viewBox="0 0 17 17"><rect x="1" y="1" width="16" height="16" fill="#585858" opacity="0.750"/><rect x="0" y="0" width="16" height="16" fill="#007400"/><rect x="2" y="2" width="12" height="12" fill="#fff"/><path d="M3 3 H6.300 L13.600 11 V12.300 H9.800 L3 4.300 Z" fill="#007400"/><path d="M10 3 H13 V4.800 L6.600 12 H3 V10.800 Z" fill="#007400"/><path d="M4.200 4.800 L10.600 12" stroke="#fff" stroke-width="1.100"/><rect x="12" y="6.600" width="2" height="2.200" fill="#fff"/></svg>
<div class="t" style="left:291.76px;top:53px;color:#fff;transform:scaleX(0.9322)">Main</div>
<div class="abs" style="left:270px;top:75px;width:346px;height:400px;border:1px solid #000;border-right-color:#fff;border-bottom-color:#fff;background:#333"></div>
<div class="t" style="left:274.45px;top:82px;color:#fff;transform:scaleX(0.9438)">Excel file name</div>
<div class="field" style="top:104px"></div>
<div class="t" style="left:274.96px;top:133px;color:#fff;transform:scaleX(0.9295)">Excel worksheet default name</div>
<div class="field" style="top:155px"></div>
<div class="t" style="left:274.97px;top:184px;color:#fff;transform:scaleX(0.9238)">Macro file name</div>
<div class="field" style="top:206px"></div>
<div class="t" style="left:274.97px;top:235px;color:#fff;transform:scaleX(0.9220)">Component's model</div>
<div class="field" style="top:258px;height:23px"></div>
<svg class="abs" style="left:281px;top:262px" width="15" height="15" viewBox="0 0 15 15"><g transform="translate(7.500 7.400)">
<g fill="#dcdcff" stroke="#000" stroke-width="1"><rect x="-1" y="-7" width="2" height="14"/><rect x="-7" y="-1" width="14" height="2"/><rect x="-1.700" y="-6.700" width="3.400" height="13.400" transform="rotate(45)" stroke-width="1.400"/><rect x="-1.700" y="-6.700" width="3.400" height="13.400" transform="rotate(-45)" stroke-width="1.400"/></g>
<g fill="#dcdcff"><rect x="-0.500" y="-6.400" width="1" height="12.800"/><rect x="-6.400" y="-0.500" width="12.800" height="1"/><rect x="-1.200" y="-6.200" width="2.400" height="12.400" transform="rotate(45)"/><rect x="-1.200" y="-6.200" width="2.400" height="12.400" transform="rotate(-45)"/></g>
<circle r="3.300" fill="#dcdcff"/><path d="M0 -2.300 L2.300 0 L0 2.300 L-2.300 0 Z" fill="#e8e8ff" stroke="#000" stroke-width="1.100"/></g></svg>
<div class="t" style="left:302.87px;top:261px;color:#000;transform:scaleX(0.9189)">Gear</div>
<svg class="abs" style="left:596px;top:259px" width="13" height="21" viewBox="0 0 13 21"><rect width="13" height="21" fill="#3a3a3a"/><rect width="13" height="11" fill="#787878"/><rect width="1" height="21" fill="#a0a0a0"/><rect x="12" width="1" height="21" fill="#707070"/><rect y="20" width="13" height="1" fill="#606060"/><path d="M1.800 7.200 H11 L6.400 12.900 Z" fill="#fff" stroke="#222" stroke-width="0.500"/></svg>
<div class="btn" style="left:274px;top:296px;width:170px;height:22px"></div>
<div class="t" style="left:325.46px;top:299px;color:#fff;transform:scaleX(0.9290)">Connection</div>
<div class="abs" style="left:4px;top:477px;width:609px;height:25px;background:#c0c0c0;border:1px solid #000"></div>
<div class="t" style="left:6.96px;top:481px;color:#000;transform:scaleX(0.9283)">Main item containing configuration's informations</div>
<div class="btn" style="left:4px;top:507px;width:109px;height:26px"></div>
<svg class="abs" style="left:12px;top:512px" width="16" height="16" viewBox="12 512 16 16"><path d="M15 514.900 L25.200 525.100 M25.200 514.900 L15 525.100" stroke="#e60000" stroke-width="3.800"/></svg>
<div class="t" style="left:53.05px;top:512px;color:#fff;transform:scaleX(0.9498)">Close</div>
<div class="abs" style="left:54px;top:528px;width:9px;height:1px;background:repeating-linear-gradient(90deg,#fff 0 1px,transparent 1px 2px)"></div>
<div class="btn" style="left:504px;top:507px;width:109px;height:26px"></div>
<svg class="abs" style="left:512px;top:512px" width="17" height="16" viewBox="0 0 17 16"><defs><linearGradient id="hg" x1="0" y1="0" x2="0" y2="1"><stop offset="0" stop-color="#a8c8f8"/><stop offset="0.500" stop-color="#4868e0"/><stop offset="1" stop-color="#0000a8"/></linearGradient></defs><circle cx="8.100" cy="7.700" r="7.700" fill="#fafaff"/><circle cx="8.100" cy="7.700" r="5.800" fill="url(#hg)"/><text x="8.100" y="11.900" font-size="11.500" font-weight="bold" fill="#fff" text-anchor="middle" font-family="Liberation Sans, sans-serif">?</text></svg>
<div class="t" style="left:557.43px;top:512px;color:#fff;transform:scaleX(0.9619)">Help</div>
<div class="abs" style="left:558px;top:528px;width:9px;height:1px;background:repeating-linear-gradient(90deg,#fff 0 1px,transparent 1px 2px)"></div>
</div></body></html>
